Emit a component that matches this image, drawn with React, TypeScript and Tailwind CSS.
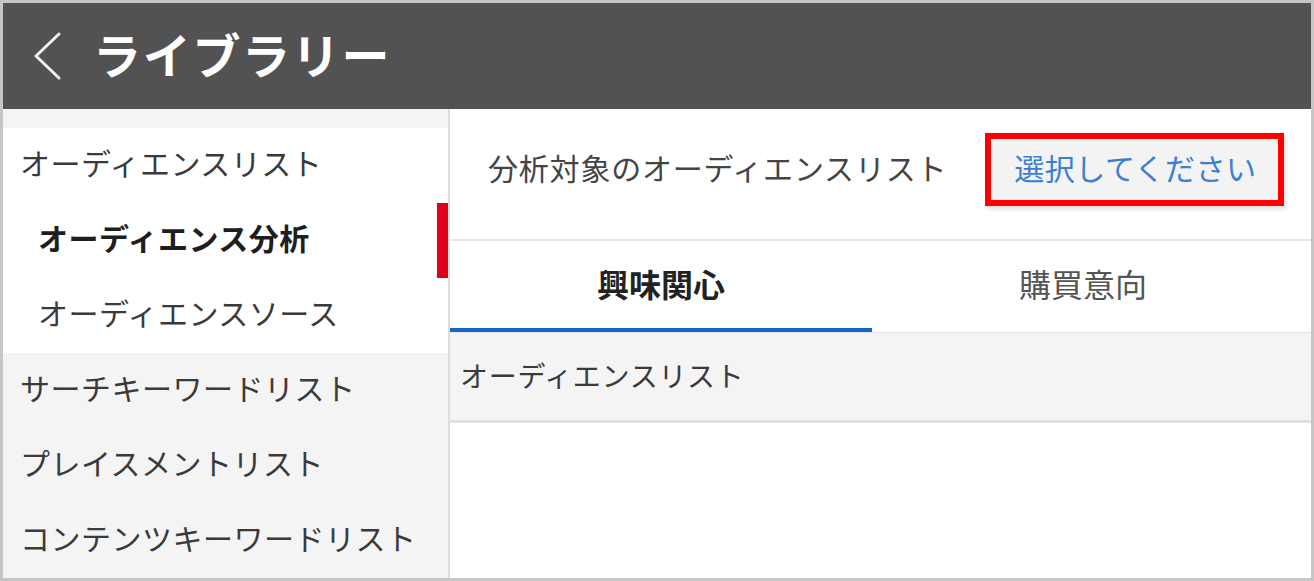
import React from 'react'

const font = { fontFamily: '"Noto Sans CJK JP", "Noto Sans", sans-serif' }

export default function App() {
  return (
    <div
      className="w-[1314px] h-[581px] border-[3px] border-[#c6c6c6] bg-white flex flex-col overflow-hidden"
      style={font}
    >
      {/* Header */}
      <div className="h-[106px] shrink-0 bg-[#525252] flex items-center pl-[28px] gap-[30px]">
        <svg width="32" height="50" viewBox="0 0 32 50" fill="none">
          <polyline points="28,3 5,25 28,47" stroke="#f2f2f2" strokeWidth="3" strokeLinecap="round" strokeLinejoin="round" />
        </svg>
        <h1 className="text-[48px] font-bold text-white leading-none tracking-[1.7px] -mt-[6px]">ライブラリー</h1>
      </div>

      <div className="flex flex-1 min-h-0">
        {/* Sidebar */}
        <div className="w-[447px] shrink-0 bg-[#f4f4f4] border-r-2 border-[#dcdcdc] flex flex-col pt-[19px] text-[30px] tracking-[0.5px]">
          <div className="bg-white">
            <div className="h-[75px] flex items-center pl-[17px] pb-[6px] text-[#3a3a3a]">オーディエンスリスト</div>
            <div className="h-[75px] flex items-center pl-[35px] font-bold text-[#1e1e1e]">
              <span className="pb-[6px]">オーディエンス分析</span>
              <span className="ml-auto w-[11px] self-stretch bg-[#e0001b]" />
            </div>
            <div className="h-[75px] flex items-center pl-[35px] pb-[6px] text-[#3a3a3a]">オーディエンスソース</div>
          </div>
          <div className="h-[75px] flex items-center pl-[17px] pb-[6px] text-[#3a3a3a]">サーチキーワードリスト</div>
          <div className="h-[75px] flex items-center pl-[17px] pb-[6px] text-[#3a3a3a]">プレイスメントリスト</div>
          <div className="h-[75px] flex items-center pl-[17px] pb-[6px] text-[#3a3a3a]">コンテンツキーワードリスト</div>
        </div>

        {/* Main */}
        <div className="flex-1 flex flex-col">
          <div className="h-[132px] shrink-0 border-b-2 border-[#e8e8e8] flex items-center pl-[38px] gap-[38px] pb-[10px]">
            <span className="text-[30px] tracking-[0.8px] text-[#444444] pb-[4px]">分析対象のオーディエンスリスト</span>
            <button className="w-[299px] h-[73px] border-[6px] border-[#ff0000] bg-[#f3f3f3] shadow-[2px_3px_4px_rgba(0,0,0,0.12)] text-left pl-[23px] pb-[4px] text-[30px] tracking-[0.5px] text-[#3b7fd4]">
              選択してください
            </button>
          </div>

          <div className="h-[92px] shrink-0 flex border-b border-[#e4e4e4]">
            <div className="w-[422px] flex items-center justify-center text-[32px] font-bold text-[#222222] border-b-4 border-[#1565c8] pb-[4px]">
              興味関心
            </div>
            <div className="w-[422px] flex items-center justify-center text-[32px] text-[#555555] pb-[8px]">
              購買意向
            </div>
          </div>

          <div className="h-[90px] shrink-0 bg-[#f4f4f4] border-b-[3px] border-[#e0e0e0] flex items-center pl-[10px] pb-[4px] text-[28px] tracking-[0.7px] text-[#3a3a3a]">
            オーディエンスリスト
          </div>

          <div className="flex-1 bg-white" />
        </div>
      </div>
    </div>
  )
}
